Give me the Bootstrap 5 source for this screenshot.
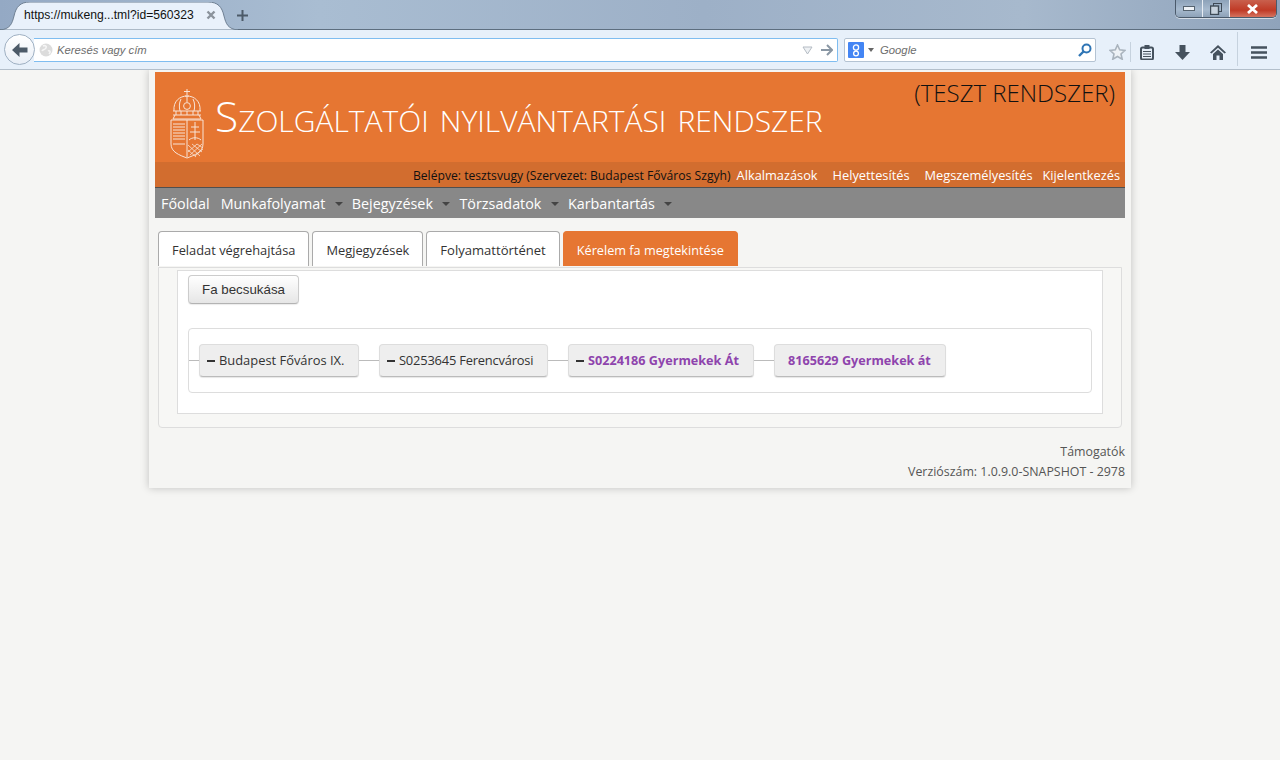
<!DOCTYPE html>
<html lang="hu">
<head>
  <meta charset="UTF-8">
  <meta name="viewport" content="width=device-width, initial-scale=1.0">
  <title>Szolgáltatói nyilvántartási rendszer</title>
  <link href="https://cdn.jsdelivr.net/npm/bootstrap@5.3.0/dist/css/bootstrap.min.css" rel="stylesheet">
  <style>
    html, body { height: 100%; }
    body { background: #f5f5f3; font-family: "Open Sans", sans-serif; font-size: 13px; color: #333; overflow: hidden; }

    /* browser chrome */
    .tabstrip { height: 30px; background: linear-gradient(90deg, #94a9c4 0%, #a9bdd2 25%, #9db0c7 55%, #a7b9cd 80%, #8fa3bb 100%); border-bottom: 1px solid #5d6e7f; position: relative; padding-left: 14px; }
    .tab-shape { position: absolute; left: 0; top: 2px; }
    .tab-title { position: relative; width: 214px; height: 29px; padding: 8px 0 0 10px; font-family: "Liberation Sans", sans-serif; font-size: 12.15px; line-height: 15px; color: #111; }
    .tab-close { position: absolute; left: 192px; top: 10px; }
    .tab-new { position: relative; margin-left: 9px; margin-top: 10px; }
    .win-btns { position: absolute; right: 3px; top: 0; width: 102px; height: 18px; border: 1px solid #4b5a6b; border-top: 0; border-radius: 0 0 5px 5px; overflow: hidden; box-shadow: 0 1px 0 rgba(255,255,255,.6); }
    .win-btn { height: 17px; border-right: 1px solid #e6ecf3; background: linear-gradient(#8da2b9, #a7bace 55%, #8ea2b8); }
    .win-min { width: 28px; }
    .win-max { width: 27px; }
    .win-close { width: 47px; border-right: 0; background: linear-gradient(#c9604d, #c03a26 60%, #d5735f); }
    .toolbar { height: 40px; background: #e7f0fa; border-bottom: 1px solid #b3bfcb; padding: 8px 0 0 4px; position: relative; }
    .back-btn { width: 31px; height: 31px; margin-top: -4px; border-radius: 50%; border: 1px solid #9fb0c2; background: linear-gradient(#fff, #e8eef6); position: relative; z-index: 1; flex: none; }
    .url-box { width: 804px; height: 24px; margin-left: -1px; background: #fff; border: 1px solid #7fbdf0; border-left: 0; border-radius: 0 2px 2px 0; padding-left: 5px; }
    .search-box { width: 252px; height: 24px; margin-left: 6px; background: #fff; border: 1px solid #b4c3d3; border-radius: 2px; padding: 0 3px; }
    .hint { font-family: "Liberation Sans", sans-serif; font-style: italic; font-size: 11.3px; color: #6d6d6d; }
    .url-box .hint { margin-left: 4px; }
    .search-box .hint { margin-left: 6px; }
    .tool-icons { margin-left: 13px; }
    .tool-sep { width: 1px; height: 20px; background: #c6d2de; }
    .tool-sep-tall { height: 34px; margin-top: -6px; }

    /* application page */
    .app-wrap { width: 982px; margin-left: 149px; height: 418px; padding: 2px 6px 0; background: #f5f5f3; box-shadow: 0 0 8px rgba(0,0,0,.22); }
    .app-head { height: 90px; background: #e67632; padding: 0 10px 0 15px; position: relative; }
    .app-title { font-size: 42.45px; font-weight: 300; font-variant: small-caps; color: #fff; line-height: 1; margin: 23px 0 0 11px; white-space: nowrap; }
    .app-test { font-size: 24px; font-weight: 300; color: #111; line-height: 1; position: absolute; right: 10px; top: 9px; }
    .crest { margin-top: 17px; flex: none; }
    .user-bar { height: 25px; background: #d26d2f; padding-right: 5px; font-size: 12.15px; line-height: 27px; color: #111; white-space: nowrap; }
    .user-bar a { color: #fff; text-decoration: none; font-size: 12.8px; }
    .main-nav { height: 31px; background: #888; border-top: 1px solid #4f4f4f; padding: 0 0 0 6px; }
    .main-nav .nav-link { padding: 0; color: #fff; font-size: 14.35px; line-height: 31px; }
    .caret-mark { display: inline-block; width: 0; height: 0; border: 4px solid transparent; border-top-color: #444; border-bottom: 0; margin: 0 9px 2px 9.5px; vertical-align: middle; }
    .main-nav .plain-item { margin-right: 11px; }

    .page-tabs { margin: 13px 0 0 3px; border-bottom: 0; gap: 3px; height: 36px; }
    .page-tabs .nav-link { height: 35px; background: #fff; border: 1px solid #aaa; border-bottom: 0; border-radius: 4px 4px 0 0; color: #333; font-size: 12.85px; padding: 0 13px; line-height: 36px; margin: 0; }
    .page-tabs .tab-history { font-size: 13.05px; }
    .page-tabs .nav-link.active { background: #e67632; border-color: #e67632; color: #fff; font-size: 12.7px; }
    .tab-pane-box { margin-left: 3px; width: 964px; height: 161px; border: 1px solid #ddd; border-radius: 0 0 4px 4px; padding: 2px 18px 0; background: #f7f7f5; }
    .tree-panel { height: 144px; background: #fff; border: 1px solid #ddd; padding: 4px 10px 0; }
    .fa-btn { width: 111px; height: 29px; padding: 0; font-family: "Liberation Sans", sans-serif; font-size: 13.33px; color: #333; background: linear-gradient(#fff, #e6e6e6); border: 1px solid #ccc; border-bottom-color: #b3b3b3; border-radius: 4px; box-shadow: 0 1px 1px rgba(0,0,0,.08); }
    .tree-box { margin-top: 24px; height: 65px; border: 1px solid #ddd; border-radius: 4px; }
    .tree-line { height: 1px; background: #bbb; flex: none; }
    .tree-node { height: 33px; background: #eee; border: 1px solid #ddd; border-bottom-color: #bbb; border-radius: 4px; font-size: 12.9px; color: #333; padding-left: 7px; white-space: nowrap; flex: none; box-shadow: 0 1px 1px rgba(0,0,0,.1); }
    .tree-node b { color: #8e44ad; font-weight: 700; font-size: 12.65px; }
    .node-tight { letter-spacing: -.2px; }
    .node-leaf { padding-left: 13px; }
    .minus-mark { width: 8px; height: 2px; background: #333; margin-right: 4px; flex: none; }
    .app-foot { text-align: right; font-size: 12.4px; line-height: 20px; color: #555; margin-top: 14px; }
  </style>
</head>
<body>
<!-- browser chrome -->
<div class="tabstrip d-flex">
  <svg class="tab-shape" width="240" height="28" viewBox="0 0 240 28">
    <path d="M0 28 C10 27 12 22 14 14 C16 5 20 0 30 0 H208 C218 0 222 5 224 14 C226 22 228 27 238 28 Z" fill="#e9f1fb" stroke="#6f8093"/>
  </svg>
  <div class="tab-title">https://mukeng...tml?id=560323
    <svg class="tab-close" width="10" height="10" viewBox="0 0 10 10"><path d="M1.5 1.5 L8.5 8.5 M8.5 1.5 L1.5 8.5" stroke="#8b939c" stroke-width="2.4"/></svg>
  </div>
  <svg class="tab-new" width="11" height="11" viewBox="0 0 11 11"><path d="M5.5 0 V11 M0 5.5 H11" stroke="#4c5a68" stroke-width="2"/></svg>
  <div class="win-btns d-flex">
    <div class="win-btn win-min d-flex align-items-center justify-content-center">
      <svg width="12" height="5" viewBox="0 0 12 5"><rect x=".5" y=".5" width="11" height="4" fill="#eef2f6" stroke="#56636f"/></svg>
    </div>
    <div class="win-btn win-max d-flex align-items-center justify-content-center">
      <svg width="12" height="12" viewBox="0 0 12 12"><rect x="3.5" y=".5" width="8" height="8" fill="none" stroke="#3e4a56"/><rect x=".5" y="3" width="8" height="8.5" fill="#c7d2dd" stroke="#3e4a56" stroke-width="1.4"/></svg>
    </div>
    <div class="win-btn win-close d-flex align-items-center justify-content-center">
      <svg width="13" height="10" viewBox="0 0 13 10"><path d="M2 1 L11 9 M11 1 L2 9" stroke="#fff" stroke-width="2.8"/></svg>
    </div>
  </div>
</div>
<div class="toolbar d-flex">
  <div class="back-btn d-flex align-items-center justify-content-center">
    <svg width="16" height="14" viewBox="0 0 16 14"><path d="M7.5 0 L0 7 L7.5 14 V9.5 H15.5 V4.5 H7.5 Z" fill="#4c5a68"/></svg>
  </div>
  <div class="url-box d-flex align-items-center">
    <svg width="14" height="14" viewBox="0 0 14 14"><circle cx="7" cy="7" r="6.5" fill="#dcdcdc"/><path d="M4 3 C6 2 8 3 7 5 C6 7 4 6 3 8 M9 8 C11 7 12 9 10 11" stroke="#f6f6f6" stroke-width="1.6" fill="none"/></svg>
    <span class="hint">Keresés vagy cím</span>
    <svg class="ms-auto" width="11" height="9" viewBox="0 0 11 9"><path d="M1 1 H10 L5.5 8 Z" fill="#eef1f4" stroke="#b5bcc4"/></svg>
    <svg class="ms-2 me-1" width="12" height="12" viewBox="0 0 12 12"><path d="M6 1 L11 6 L6 11 M0 6 H10.5" fill="none" stroke="#8a97a4" stroke-width="2"/></svg>
  </div>
  <div class="search-box d-flex align-items-center">
    <svg width="16" height="16" viewBox="0 0 16 16"><rect width="16" height="16" rx="1" fill="#4385f4"/><circle cx="8" cy="5.5" r="2.6" fill="none" stroke="#fff" stroke-width="1.3"/><circle cx="8" cy="11.5" r="2.4" fill="none" stroke="#fff" stroke-width="1.3"/><path d="M8 8 V9" stroke="#fff"/></svg>
    <svg class="ms-1" width="6" height="4" viewBox="0 0 6 4"><path d="M0 0 H6 L3 4 Z" fill="#666"/></svg>
    <span class="hint">Google</span>
    <svg class="ms-auto" width="14" height="14" viewBox="0 0 14 14"><circle cx="8.5" cy="5.5" r="4" fill="none" stroke="#2f75b5" stroke-width="2"/><path d="M5.5 8.5 L1 13" stroke="#2f75b5" stroke-width="2.4"/></svg>
  </div>
  <div class="tool-icons d-flex align-items-center align-self-start">
    <svg width="17" height="16" viewBox="0 0 17 16"><path d="M8.5 1 L10.7 5.8 L16 6.4 L12 10 L13.2 15.2 L8.5 12.5 L3.8 15.2 L5 10 L1 6.4 L6.3 5.8 Z" fill="#eef2f6" stroke="#a9b3bd" stroke-width="1.6"/></svg>
    <div class="tool-sep ms-1"></div>
    <svg style="margin-left:9px" width="14" height="15" viewBox="0 0 14 15"><rect x="1" y="2.5" width="12" height="12" rx="1.5" fill="none" stroke="#46525e" stroke-width="2"/><rect x="4.5" y="0" width="5" height="4" fill="#46525e"/><path d="M3 6.5 H11 M3 9 H11 M3 11.5 H11" stroke="#46525e" stroke-width="1.2"/></svg>
    <svg style="margin-left:21px" width="15" height="15" viewBox="0 0 15 15"><path d="M4.5 0 H10.5 V7 H15 L7.5 15 L0 7 H4.5 Z" fill="#46525e"/></svg>
    <svg style="margin-left:20px" width="16" height="15" viewBox="0 0 16 15"><path d="M8 0 L16 7.5 L14.5 8.5 L8 2.8 L1.5 8.5 L0 7.5 Z" fill="#46525e"/><path d="M3 9 L8 4.5 L13 9 V15 H9.5 V10.5 H6.5 V15 H3 Z" fill="#46525e"/></svg>
    <div class="tool-sep tool-sep-tall" style="margin-left:11px"></div>
    <svg style="margin-left:13px" width="16" height="13" viewBox="0 0 16 13"><path d="M0 1.5 H16 M0 6.5 H16 M0 11.5 H16" stroke="#46525e" stroke-width="2.6"/></svg>
  </div>
</div>

<!-- application -->
<div class="app-wrap">
  <div class="app-head d-flex">
    <svg class="crest" width="34" height="70" viewBox="0 0 34 70" fill="none" stroke="#f8e3d6" stroke-width="1">
      <path d="M17 0 V6 M14 2.5 H20 M15 7 H19"/>
      <path d="M4 22 C3 12 10 7 17 7 C24 7 31 12 30 22"/>
      <path d="M11 10 C9 14 9 18 10 22 M23 10 C25 14 25 18 24 22 M17 7 V13"/>
      <circle cx="17" cy="17" r="3.4"/>
      <path d="M3 22 H31 M3 26 H31 M6 22 V26 M11 22 V26 M17 22 V26 M23 22 V26 M28 22 V26"/>
      <path d="M5 26 L3 30 H31 L29 26"/>
      <path d="M1 31 H33 V55 C33 63 25 66 17 69 C9 66 1 63 1 55 Z"/>
      <path d="M17 31 V68"/>
      <path d="M3 35 H15 M3 38 H15 M3 41 H15 M3 44 H15 M3 47 H15 M3 50 H15"/>
      <path d="M25 33 V51 M21 38 H29 M20 43 H30"/>
      <path d="M19 51 C22 48 28 48 31 51"/>
      <path d="M18 56 L30 67 M18 61 L26 68 M22 55 L32 63 M27 55 L33 59 M32 55 L20 66 M27 55 L18 63 M33 60 L25 67" stroke-width=".8"/>
      <path d="M3 55 H15" />
    </svg>
    <div class="app-title">Szolgáltatói nyilvántartási rendszer</div>
    <div class="app-test">(TESZT RENDSZER)</div>
  </div>
  <div class="user-bar d-flex justify-content-end">
    <span>Belépve: tesztsvugy (Szervezet: Budapest Főváros Szgyh)</span>
    <a href="#" style="margin-left:6px">Alkalmazások</a>
    <a href="#" style="margin-left:15px">Helyettesítés</a>
    <a href="#" style="margin-left:15px">Megszemélyesítés</a>
    <a href="#" style="margin-left:10px">Kijelentkezés</a>
  </div>
  <ul class="nav main-nav">
    <li class="nav-item plain-item"><a class="nav-link" href="#">Főoldal</a></li>
    <li class="nav-item"><a class="nav-link" href="#">Munkafolyamat<span class="caret-mark"></span></a></li>
    <li class="nav-item"><a class="nav-link" href="#">Bejegyzések<span class="caret-mark"></span></a></li>
    <li class="nav-item"><a class="nav-link" href="#">Törzsadatok<span class="caret-mark"></span></a></li>
    <li class="nav-item"><a class="nav-link" href="#">Karbantartás<span class="caret-mark"></span></a></li>
  </ul>

  <ul class="nav nav-tabs page-tabs">
    <li class="nav-item"><a class="nav-link" href="#">Feladat végrehajtása</a></li>
    <li class="nav-item"><a class="nav-link" href="#">Megjegyzések</a></li>
    <li class="nav-item"><a class="nav-link tab-history" href="#">Folyamattörténet</a></li>
    <li class="nav-item"><a class="nav-link active" href="#">Kérelem fa megtekintése</a></li>
  </ul>
  <div class="tab-pane-box">
    <div class="tree-panel">
      <button type="button" class="btn fa-btn">Fa becsukása</button>
      <div class="tree-box d-flex align-items-center">
        <div class="tree-line" style="width:10px"></div>
        <div class="tree-node d-flex align-items-center" style="width:160px"><span class="minus-mark"></span>Budapest Főváros IX.</div>
        <div class="tree-line" style="width:20px"></div>
        <div class="tree-node node-tight d-flex align-items-center" style="width:169px"><span class="minus-mark"></span>S0253645 Ferencvárosi</div>
        <div class="tree-line" style="width:20px"></div>
        <div class="tree-node d-flex align-items-center" style="width:186px"><span class="minus-mark"></span><b>S0224186 Gyermekek Át</b></div>
        <div class="tree-line" style="width:20px"></div>
        <div class="tree-node node-leaf d-flex align-items-center" style="width:172px"><b>8165629 Gyermekek át</b></div>
      </div>
    </div>
  </div>
  <div class="app-foot">Támogatók<br>Verziószám: 1.0.9.0-SNAPSHOT - 2978</div>
</div>
<script src="https://cdn.jsdelivr.net/npm/bootstrap@5.3.0/dist/js/bootstrap.bundle.min.js"></script>
</body>
</html>
